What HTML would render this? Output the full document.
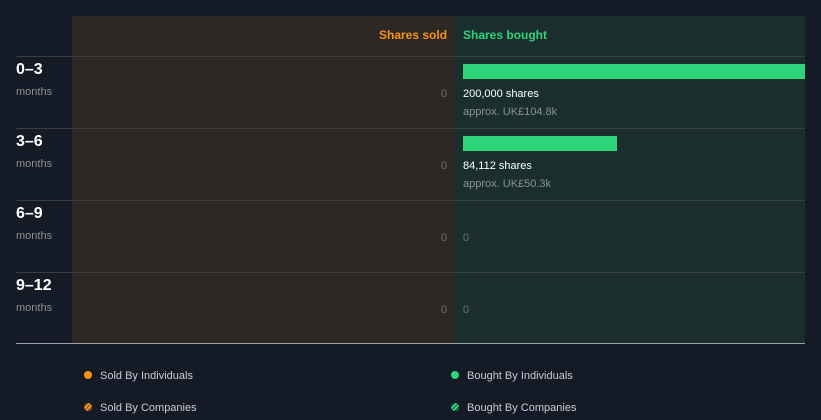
<!DOCTYPE html><html><head><style>
body{margin:0;width:821px;height:420px;background:#151b26;font-family:"Liberation Sans",sans-serif;position:relative;overflow:hidden}
div,span{position:absolute}
.t{font-size:12px}
.lab{left:16px;color:#fff;font-weight:bold;font-size:16px}
.mo{left:16px;color:#8a8f98;font-size:11px}
.z{color:#6e6e6e;font-size:11px}
.ln{left:16px;width:789px;height:1px;background:#3a3d42}
</style></head><body>
<div style="left:72px;top:16px;width:383px;height:327px;background:#2d2823"></div>
<div style="left:455px;top:16px;width:350px;height:327px;background:#1a2e2e"></div>
<div class="t" style="left:379px;top:28px;color:#f7931a;font-weight:bold">Shares sold</div>
<div class="t" style="left:463px;top:28px;color:#2ed47a;font-weight:bold">Shares bought</div>
<div class="ln" style="top:56px"></div><div class="ln" style="top:128px"></div><div class="ln" style="top:200px"></div><div class="ln" style="top:272px"></div>
<div class="ln" style="top:343px;background:#9aa0a6"></div>
<div class="lab" style="top:61px">0–3</div><div class="mo" style="top:86px">months</div>
<div class="lab" style="top:133px">3–6</div><div class="mo" style="top:158px">months</div>
<div class="lab" style="top:205px">6–9</div><div class="mo" style="top:230px">months</div>
<div class="lab" style="top:277px">9–12</div><div class="mo" style="top:302px">months</div>
<div class="z" style="left:441px;top:88px">0</div><div class="z" style="left:441px;top:160px">0</div><div class="z" style="left:441px;top:232px">0</div><div class="z" style="left:441px;top:304px">0</div>
<div class="z" style="left:463px;top:232px">0</div><div class="z" style="left:463px;top:304px">0</div>
<div style="left:463px;top:64px;width:342px;height:15px;background:#2ed47a"></div>
<div style="left:463px;top:88px;color:#fff;font-size:11px">200,000 shares</div>
<div style="left:463px;top:106px;color:#8a8f98;font-size:11px">approx. UK£104.8k</div>
<div style="left:463px;top:136px;width:154px;height:15px;background:#2ed47a"></div>
<div style="left:463px;top:160px;color:#fff;font-size:11px">84,112 shares</div>
<div style="left:463px;top:178px;color:#8a8f98;font-size:11px">approx. UK£50.3k</div>
<div style="left:84px;top:371px;width:8px;height:8px;border-radius:50%;background:#f7931a"></div>
<div style="left:100px;top:370px;color:#c8ccd2;font-size:11px">Sold By Individuals</div>
<div style="left:84px;top:403px;width:8px;height:8px;border-radius:50%;background:repeating-linear-gradient(135deg,#f7931a 0 2px,#4a3520 2px 3px)"></div>
<div style="left:100px;top:402px;color:#c8ccd2;font-size:11px">Sold By Companies</div>
<div style="left:451px;top:371px;width:8px;height:8px;border-radius:50%;background:#2ed47a"></div>
<div style="left:467px;top:370px;color:#c8ccd2;font-size:11px">Bought By Individuals</div>
<div style="left:451px;top:403px;width:8px;height:8px;border-radius:50%;background:repeating-linear-gradient(135deg,#2ed47a 0 2px,#1a3a30 2px 3px)"></div>
<div style="left:467px;top:402px;color:#c8ccd2;font-size:11px">Bought By Companies</div>
</body></html>
